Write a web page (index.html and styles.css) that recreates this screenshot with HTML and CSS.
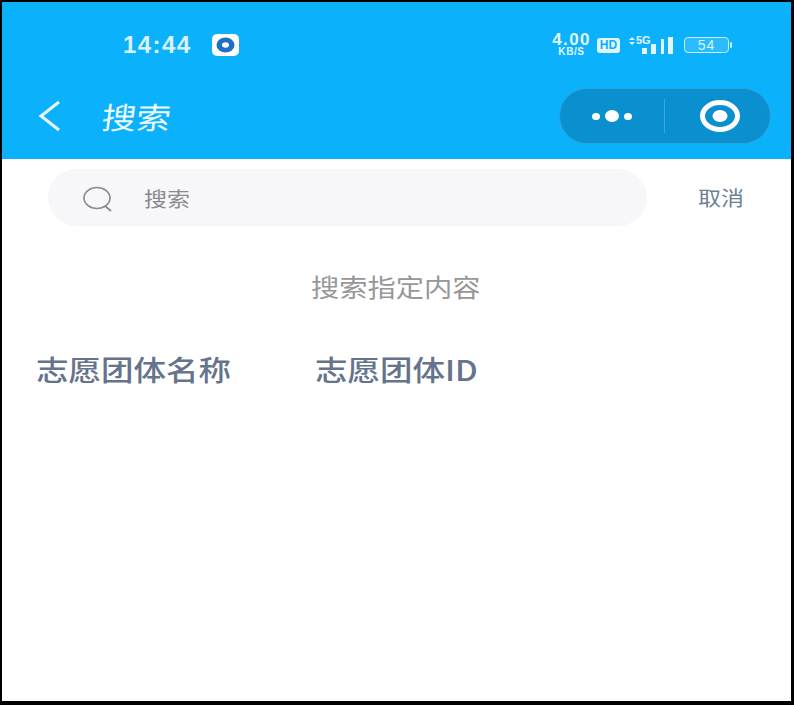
FILE: index.html
```html
<!DOCTYPE html>
<html lang="zh-CN">
<head>
    <meta charset="UTF-8">
    <meta name="viewport" content="width=device-width, initial-scale=1.0">
    <title>搜索</title>
    <link rel="stylesheet" href="styles.css">
</head>
<body>
    <div class="frame">
        <header class="top">
            <div class="statusbar">
                <div class="status-left">
                    <span class="clock">14:44</span>
                    <svg class="app-badge" width="27" height="22" viewBox="0 0 27 22">
                        <rect width="27" height="22" rx="5" fill="#fff"/>
                        <ellipse cx="13.5" cy="11" rx="9" ry="7.5" fill="#1f6fc4"/>
                        <ellipse cx="13.5" cy="11" rx="3.5" ry="2.8" fill="#fff"/>
                    </svg>
                </div>
                <div class="status-right">
                    <div class="speed"><span>4.00</span><span class="speed-unit">KB/S</span></div>
                    <span class="hd">HD</span>
                    <div class="signal">
                        <svg width="44" height="18" viewBox="0 0 44 18">
                            <path d="M3 1 L6 4 H0 Z M3 9 L0 6 H6 Z" fill="#d9f3ff"/>
                            <rect x="13" y="12" width="5" height="6" fill="#e2f6ff"/>
                            <rect x="22" y="8" width="5" height="10" fill="#e2f6ff"/>
                            <rect x="32" y="3" width="3" height="15" fill="#e2f6ff"/>
                            <rect x="39" y="1" width="5" height="17" fill="#e2f6ff"/>
                        </svg>
                        <span class="signal-label">5G</span>
                    </div>
                    <div class="battery"><span class="battery-body">54</span><span class="battery-tip"></span></div>
                </div>
            </div>
            <div class="navbar">
                <svg class="back" width="24" height="32" viewBox="0 0 24 32">
                    <path d="M21 2 L3 16 L21 30" fill="none" stroke="#e6f8ff" stroke-width="3"/>
                </svg>
                <span class="nav-title">搜索</span>
                <div class="capsule">
                    <div class="capsule-more">
                        <span class="dot"></span>
                        <span class="dot dot-big"></span>
                        <span class="dot"></span>
                    </div>
                    <span class="capsule-line"></span>
                    <div class="capsule-close">
                        <svg width="44" height="36" viewBox="0 0 44 36">
                            <ellipse cx="22" cy="18" rx="17.5" ry="13.5" fill="none" stroke="#fff" stroke-width="5"/>
                            <ellipse cx="22" cy="18" rx="7.5" ry="6" fill="#fff"/>
                        </svg>
                    </div>
                </div>
            </div>
        </header>

        <div class="search-row">
            <div class="search-box">
                <svg class="search-icon" width="32" height="26" viewBox="0 0 32 26">
                    <ellipse cx="15" cy="12" rx="13" ry="10.5" fill="none" stroke="#8d8d90" stroke-width="1.7"/>
                    <path d="M23 20 L29 25" fill="none" stroke="#8d8d90" stroke-width="2"/>
                </svg>
                <span class="search-text">搜索</span>
            </div>
            <span class="cancel">取消</span>
        </div>

        <p class="hint">搜索指定内容</p>

        <div class="options">
            <span class="option option-name">志愿团体名称</span>
            <span class="option">志愿团体ID</span>
        </div>
    </div>
</body>
</html>
```

FILE: styles.css
```css
* {
    margin: 0;
    padding: 0;
    box-sizing: border-box;
}
html, body {
    width: 794px;
    height: 705px;
    overflow: hidden;
    background: #000;
}
body {
    font-family: 'Noto Sans CJK SC', 'Liberation Sans', sans-serif;
    padding: 2px 3px 4px 2px;
}
.frame {
    height: 699px;
    background: #fff;
}
.top {
    height: 157px;
    background: #0cb1fb;
    color: #fff;
}
.statusbar {
    height: 86px;
    display: flex;
    justify-content: space-between;
    align-items: center;
    padding: 0 59px 0 121px;
}
.status-left {
    display: flex;
    align-items: center;
    gap: 21px;
}
.clock {
    font-family: 'Liberation Sans', sans-serif;
    font-size: 24px;
    font-weight: bold;
    letter-spacing: 1.4px;
    color: #d8f3ff;
}
.status-right {
    display: flex;
    align-items: center;
}
.speed {
    width: 39px;
    display: flex;
    flex-direction: column;
    align-items: center;
    font-family: 'Liberation Sans', sans-serif;
    font-weight: bold;
    font-size: 17px;
    line-height: 12px;
    letter-spacing: 1.4px;
    color: #e2f6ff;
}
.speed-unit {
    margin-top: 2px;
    font-size: 10px;
    line-height: 8px;
    letter-spacing: .6px;
}
.hd {
    margin-left: 6px;
    width: 23px;
    height: 15px;
    border-radius: 3px;
    background: #e2f6ff;
    color: #0cb1fb;
    font-family: 'Liberation Sans', sans-serif;
    font-weight: bold;
    font-size: 12px;
    line-height: 15px;
    text-align: center;
}
.signal {
    margin-left: 9px;
    position: relative;
    display: flex;
}
.signal-label {
    position: absolute;
    left: 7px;
    top: -1px;
    font-family: 'Liberation Sans', sans-serif;
    font-weight: bold;
    font-size: 11px;
    line-height: 11px;
    color: #e2f6ff;
}
.battery {
    margin-left: 11px;
    display: flex;
    align-items: center;
    gap: 1px;
}
.battery-body {
    width: 45px;
    height: 16px;
    border: 1px solid #c5eeff;
    border-radius: 4px;
    background: #2dbcfb;
    font-family: 'Liberation Sans', sans-serif;
    font-size: 14px;
    line-height: 14px;
    letter-spacing: 1px;
    text-align: center;
    color: #d9f3ff;
}
.battery-tip {
    width: 2px;
    height: 6px;
    border-radius: 1px;
    background: #c5eeff;
}
.navbar {
    height: 56px;
    display: flex;
    align-items: center;
    padding: 0 20px 0 36px;
}
.nav-title {
    margin-left: 40px;
    font-size: 30px;
    line-height: 1;
    color: #eafaff;
    transform-origin: left center;
    transform: scaleX(1.15) skewX(-6deg);
}
.capsule {
    margin-left: auto;
    width: 212px;
    height: 56px;
    border-radius: 28px;
    background: #0a90cf;
    border: 1px solid #2ba5dc;
    display: flex;
    align-items: center;
}
.capsule-more {
    flex: 1;
    display: flex;
    align-items: center;
    justify-content: center;
    gap: 5px;
}
.dot {
    width: 8px;
    height: 7px;
    border-radius: 50%;
    background: #fff;
}
.dot-big {
    width: 14px;
    height: 12px;
}
.capsule-line {
    width: 1px;
    height: 34px;
    background: #3aaadd;
}
.capsule-close {
    width: 105px;
    padding-left: 4px;
    display: flex;
    justify-content: center;
}
.search-row {
    display: flex;
    align-items: center;
    padding: 10px 0 0 46px;
}
.search-box {
    width: 599px;
    height: 57px;
    border-radius: 29px;
    background: #f7f6f8;
    display: flex;
    align-items: center;
    padding-left: 34px;
}
.search-icon {
    margin-top: 3px;
}
.search-text {
    margin: 1px 0 0 30px;
    font-size: 20px;
    color: #8a8a8e;
    transform-origin: left center;
    transform: scaleX(1.15);
}
.cancel {
    margin-left: 51px;
    font-size: 20px;
    color: #6f7f97;
    transform-origin: left center;
    transform: scaleX(1.15);
}
.hint {
    width: fit-content;
    margin: 41px 0 0 309px;
    font-size: 25px;
    line-height: 38px;
    color: #979799;
    transform-origin: left center;
    transform: scaleX(1.13);
}
.options {
    margin-top: 44px;
    padding-left: 34px;
    display: flex;
}
.option {
    font-size: 28px;
    line-height: 40px;
    font-weight: 500;
    color: #65738c;
    transform-origin: left center;
    transform: scaleX(1.16);
}
.option-name {
    width: 279px;
}
```
